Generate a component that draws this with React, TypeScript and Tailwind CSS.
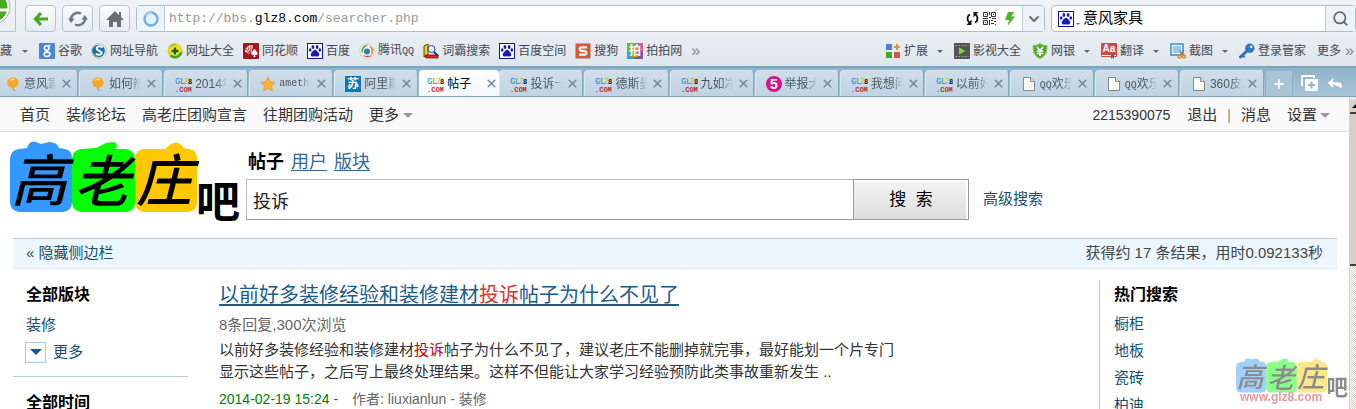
import type { ReactNode } from "react";
import { ChevronDown, Plus, Reply, Search, X } from "lucide-react";

const sans = "font-['Liberation_Sans','Noto_Sans_CJK_SC',sans-serif]";

/* ---------- icons ---------- */

function Icon({ children, size = 16 }: { children: ReactNode; size?: number }) {
  return (
    <svg width={size} height={size} viewBox="0 0 16 16" className="shrink-0" aria-hidden="true">
      {children}
    </svg>
  );
}

const PawIcon = () => (
  <Icon>
    <rect x="0.5" y="0.5" width="15" height="15" fill="#fff" stroke="#1414a0" />
    <g fill="#1717c4">
      <ellipse cx="5.9" cy="4" rx="1.4" ry="2" />
      <ellipse cx="10.1" cy="4" rx="1.4" ry="2" />
      <ellipse cx="3.2" cy="7" rx="1.3" ry="1.8" />
      <ellipse cx="12.8" cy="7" rx="1.3" ry="1.8" />
      <path d="M8 6.800c1.500 0 2 1.700 3.300 2.700 1.500 1.200 1.200 4-.8 4.100-1 0-1.500-.4-2.500-.4s-1.500.4-2.500.4c-2-.1-2.300-2.900-.8-4.100C6 8.500 6.500 6.800 8 6.800z" />
    </g>
  </Icon>
);

const GoogleIcon = () => (
  <Icon>
    <rect width="16" height="16" rx="1" fill="#4a86dc" />
    <g fill="none" stroke="#fff" strokeWidth="1.600">
      <circle cx="7.700" cy="5" r="2.300" />
      <ellipse cx="8" cy="11.300" rx="2.900" ry="2.200" />
      <path d="M9.500 2.500h2M8.500 7.200c-1 .8-.5 1.200.5 2" />
    </g>
  </Icon>
);

const NavSiteIcon = () => (
  <Icon>
    <circle cx="8" cy="8" r="7.500" fill="#e8eef2" stroke="#b8c6d0" />
    <circle cx="7.500" cy="8" r="6.300" fill="#1d6fa5" />
    <path d="M11.500 4.500C8 2 5 4 6 6.300c.8 1.700 4.500 1.500 4.700 3.600.2 1.800-3.200 2.500-6 1" fill="none" stroke="#fff" strokeWidth="2" />
    <path d="M2 10a6 6 0 0 0 5 4.500l-1-2.500z" fill="#5cb531" />
  </Icon>
);

const PlusBallIcon = () => (
  <Icon>
    <circle cx="8" cy="8" r="7.500" fill="#e9d414" />
    <path d="M2.500 13A7.500 7.500 0 0 0 15.500 8c-3 3-9 2-13 5z" fill="#3aa72a" />
    <path d="M1 5.500A7.500 7.500 0 0 1 10 .8C7 1.500 3 3 1 5.500z" fill="#71b82c" />
    <circle cx="8" cy="8" r="4.800" fill="#f5e535" />
    <path d="M8 4.500v7M4.500 8h7" stroke="#17651e" strokeWidth="2.400" />
  </Icon>
);

const FlushIcon = () => (
  <Icon>
    <rect width="16" height="16" rx="1" fill="#a5161d" />
    <path d="M2 9C2 4 6 1.500 10 2.500L8 12z" fill="#f3dcda" />
    <path d="M7.500 12 3 6m4.500 6L5 4m2.500 8L8 3M7 12 2 9" stroke="#a5161d" strokeWidth=".8" />
    <path d="M11.500 6c2 2.500 3 3 3 4.500s-2 2-2.500 1l.5 2.500h-2l.5-2.500c-.5 1-2.500.5-2.500-1s1-2 3-4.500z" fill="#fff" />
  </Icon>
);

const TencentIcon = () => (
  <Icon>
    <circle cx="8" cy="8" r="7.300" fill="#fafafa" stroke="#c4ccd0" strokeWidth=".8" />
    <path d="M10 1.500C4 1 1 6 3 11c1-5 3-7.500 7-9.500z" fill="#57ad40" />
    <path d="M10 2c5 2 5.500 8 2 11 1-4 .5-7-2-11z" fill="#ee8c2c" />
    <path d="M3.500 12c3 3 7 2.500 9 .5-3 .5-6 .5-9-.5z" fill="#d93b2c" />
    <circle cx="8" cy="8.500" r="3" fill="#2482b4" />
  </Icon>
);

const DictIcon = () => (
  <Icon>
    <path d="M1 3 5 1v11l-4 2z" fill="#f4cf1f" stroke="#5b4300" />
    <path d="M2 12h13v3H3z" fill="#d62b20" stroke="#6b1711" strokeWidth=".8" />
    <circle cx="8.500" cy="6" r="3.500" fill="#e4f1fb" stroke="#2b4c9c" />
    <path d="m11 9 4 4" stroke="#2b2b7c" strokeWidth="2" />
  </Icon>
);

const SogouIcon = () => (
  <Icon>
    <rect x=".5" y=".5" width="15" height="15" rx="1" fill="#d9572a" stroke="#b9a69d" />
    <path d="M12 4.300H6.500c-2.400 0-2.400 3.300 0 3.500l3 .3c2.400.3 2.400 3.600 0 3.600H4" fill="none" stroke="#fff" strokeWidth="2.200" />
  </Icon>
);

const PaipaiIcon = () => (
  <Icon>
    <rect width="8" height="8" fill="#76b82a" />
    <rect x="8" width="8" height="8" fill="#d95aa0" />
    <rect y="8" width="8" height="8" fill="#35a3c6" />
    <rect x="8" y="8" width="8" height="8" fill="#7d55a5" />
    <rect x="5" y="2" width="6" height="12" fill="#e88c22" />
    <text x="8" y="12" textAnchor="middle" fill="#fff" className="font-['Noto_Sans_CJK_SC',sans-serif] text-[12px] font-bold">拍</text>
  </Icon>
);

const AddonIcon = () => (
  <Icon>
    <rect x="1" y="1" width="6" height="6" fill="#4f80cc" />
    <rect x="1" y="9" width="6" height="6" fill="#48a32b" />
    <rect x="9" y="9" width="6" height="6" fill="#d0564d" />
    <path d="M12 1v6M9 4h6" stroke="#e58b42" strokeWidth="2" />
  </Icon>
);

const VideoIcon = () => (
  <Icon>
    <rect width="16" height="16" rx="1" fill="#53564f" />
    <path d="M1.500 2.500h13M1.500 13.500h13" stroke="#a6a89f" strokeDasharray="1.500 1.500" />
    <path d="m5 4.500 6.500 3.500L5 11.500z" fill="#83d63e" />
  </Icon>
);

const BankIcon = () => (
  <Icon>
    <path d="M8 .5c2 1.500 4.500 2 7 2 .3 6.500-1.500 11-7 13-5.500-2-7.300-6.500-7-13 2.500 0 5-.5 7-2z" fill="#4eac2a" stroke="#8bcc6d" />
    <path d="m5 4 3 3.500L11 4M8 7.500V13M4.800 8h6.400M4.800 10.500h6.400" stroke="#fff" strokeWidth="1.600" fill="none" />
  </Icon>
);

const TranslateIcon = () => (
  <Icon>
    <rect width="16" height="14" rx="1" fill="#d24a3e" />
    <path d="M1 12.500h14" stroke="#fff" />
    <path d="M10 11h3v5l-1.500-1.500L10 16z" fill="#3867b5" />
    <text x="8" y="9" textAnchor="middle" fill="#fff" className="font-['Liberation_Sans',sans-serif] text-[10px] font-bold">Aa</text>
  </Icon>
);

const CaptureIcon = () => (
  <Icon>
    <rect x="1" y="1" width="12" height="11" fill="#e7f3fb" stroke="#3a8dc4" strokeWidth="1.500" />
    <rect x="3" y="3" width="8" height="7" fill="#9accea" />
    <path d="m9 7 4 5m1-5-4 5" stroke="#777" strokeWidth="1.200" />
    <circle cx="9.500" cy="13.500" r="1.600" fill="none" stroke="#e58a1d" strokeWidth="1.500" />
    <circle cx="14" cy="13.500" r="1.400" fill="none" stroke="#e58a1d" strokeWidth="1.500" />
  </Icon>
);

const KeyIcon = () => (
  <Icon>
    <path d="m8.500 7.500-7 6.500" stroke="#2b6fb8" strokeWidth="3" strokeLinecap="round" />
    <path d="m4 12.500 1.500 2" stroke="#2b6fb8" strokeWidth="2" />
    <circle cx="10.800" cy="5.200" r="4.700" fill="#2f78c4" />
    <circle cx="12.200" cy="3.900" r="1.300" fill="#e8f2fb" />
  </Icon>
);

const BalloonIcon = () => (
  <Icon>
    <path d="M8 1.500c4 0 6 3 5.500 6-.4 2.500-2.500 4-4.500 4.200L7.500 14l-.5-2.500C3.500 11 2 8.500 2.200 6 2.500 3.500 5 1.500 8 1.500z" fill="#f8a626" />
    <path d="M5 4.500c1.500-1.500 3.500-1.500 5-.5" stroke="#fdd98f" strokeWidth="1.500" fill="none" />
    <path d="M8 12.500c0 1.500 1.500 1 1.500 2.500" stroke="#b37a38" fill="none" />
  </Icon>
);

const StarIcon = () => (
  <Icon>
    <path d="m8 1 2.200 4.600 5 .7-3.700 3.500.9 5L8 12.400l-4.400 2.400.9-5L.8 6.300l5-.7z" fill="#f6b23d" stroke="#e49b30" strokeWidth=".8" />
  </Icon>
);

const SuIcon = () => (
  <Icon>
    <rect width="16" height="16" fill="#0f78b8" />
    <text x="8" y="12" textAnchor="middle" fill="#fff" className="font-['Noto_Sans_CJK_SC',sans-serif] text-[12px] font-bold">苏</text>
  </Icon>
);

const FiveIcon = () => (
  <Icon>
    <circle cx="8" cy="8" r="8" fill="#d3148c" />
    <text x="8" y="13" textAnchor="middle" fill="#fff" className="font-['Liberation_Sans',sans-serif] text-[14px] font-bold">5</text>
  </Icon>
);

const PageIcon = () => (
  <Icon>
    <path d="M2.500 1.500h7l4 4v9h-11z" fill="#fbfbf8" stroke="#83898c" />
    <path d="M9.500 1.500v4h4" fill="#dfe3e4" stroke="#83898c" />
  </Icon>
);

const GlzIcon = () => (
  <svg width="17" height="16" viewBox="0 0 17 16" className="shrink-0 font-['Liberation_Mono',monospace]" aria-hidden="true">
    <g className="text-[9px]">
      <text x="0" y="8" fill="#1f7fdc">G</text>
      <text x="5" y="8" fill="#2fa848">L</text>
      <text x="9" y="8" fill="#ecaf45">Z</text>
    </g>
    <text x="13" y="8" fill="#111" className="text-[7px] font-bold">8</text>
    <text x="0" y="16" fill="#bd2a20" className="text-[7px] font-bold">.COM</text>
  </svg>
);

const RefreshIcon = () => (
  <svg width="20" height="18" viewBox="0 0 20 18" fill="none" aria-hidden="true">
    <path d="M3 10a7 6.500 0 0 1 10-6.500M17 8a7 6.500 0 0 1-10 6.500" stroke="#6f7780" strokeWidth="2.400" />
    <path d="M0 8.500h6.500L3.200 13zM13.500 9.500H20L16.800 5z" fill="#6f7780" />
  </svg>
);

const CycleIcon = () => (
  <svg width="13" height="13" viewBox="0 0 13 13" aria-hidden="true">
    <path d="M4 2.500C.8 4 .8 9 3.500 10.500M9 10.500c3.200-1.500 3.200-6.500.5-8" fill="none" stroke="#111" strokeWidth="1.800" />
    <path d="M5.500 7.500V13H.5zM7.500 5.500V0h5z" fill="#111" />
  </svg>
);

const QrIcon = () => (
  <svg width="13" height="13" viewBox="0 0 13 13" aria-hidden="true">
    <g fill="none" stroke="#333">
      <path d="M.5.500h4v4h-4zM8.500.500h4v4h-4zM.5 8.500h4v4h-4z" />
      <path d="M2 2.500h1M10 2.500h1M2 10.500h1M6.500 0v3M6 5.500h2M0 6.500h5M9 6.500h4M6.500 8v5M8 8.500h2M11 9.500h2M8 11.500h3M12 12.500h1" />
    </g>
  </svg>
);

const BoltIcon = () => (
  <svg width="12" height="14" viewBox="0 0 12 14" aria-hidden="true">
    <path d="M4 0h6L7.500 4.500H11L3.500 14 5 8H1z" fill="#4db52a" />
  </svg>
);

const Caret = ({ className = "" }: { className?: string }) => (
  <span className={`inline-block h-0 w-0 border-x-transparent border-b-0 ${className}`} />
);

/* ---------- site logo ---------- */

function Logo({ className }: { className: string }) {
  return (
    <svg viewBox="0 0 230 84" className={className} role="img" aria-label="高老庄吧">
      <path d="M0 17q1-8 9-9l8-1q3-8 9-6l5 2 8-2q8 0 10 6l6 1q7 1 7 9v44q0 9-9 10H9q-8-1-9-9z" fill="#3399ff" />
      <path d="M62 17q1-8 9-9l15-1 10-5 7-1q6 1 3 7l10 0q8 1 9 9v44q0 9-9 10H71q-8-1-9-9z" fill="#00ff00" />
      <path d="M125 17q1-8 8-9l22 0 6-5q7-4 11 2l4 3 3 0q8 1 8 9v44q0 9-9 10h-44q-8-1-9-9z" fill="#ffc800" />
      <g className="font-['Noto_Sans_CJK_SC',sans-serif] text-[56px] font-medium italic">
        <text x="1" y="60">高</text>
        <text x="64" y="61">老</text>
        <text x="126" y="60">庄</text>
      </g>
      <text x="186" y="77" className="font-['Noto_Sans_CJK_SC',sans-serif] text-[44px] font-bold">吧</text>
    </svg>
  );
}

/* ---------- browser chrome ---------- */

const SmallQQ = () => <span className="font-['Liberation_Mono',monospace] text-[10px]">QQ</span>;

const bookmarks = [
  { label: "谷歌", icon: <GoogleIcon /> },
  { label: "网址导航", icon: <NavSiteIcon /> },
  { label: "网址大全", icon: <PlusBallIcon /> },
  { label: "同花顺", icon: <FlushIcon /> },
  { label: "百度", icon: <PawIcon /> },
  { label: <span>腾讯<SmallQQ /></span>, icon: <TencentIcon /> },
  { label: "词霸搜索", icon: <DictIcon /> },
  { label: "百度空间", icon: <PawIcon /> },
  { label: "搜狗", icon: <SogouIcon /> },
  { label: "拍拍网", icon: <PaipaiIcon /> },
];

const tools = [
  { label: "扩展", icon: <AddonIcon />, menu: true },
  { label: "影视大全", icon: <VideoIcon />, menu: false },
  { label: "网银", icon: <BankIcon />, menu: true },
  { label: "翻译", icon: <TranslateIcon />, menu: true },
  { label: "截图", icon: <CaptureIcon />, menu: true },
  { label: "登录管家", icon: <KeyIcon />, menu: false },
];

const tabs = [
  { title: "意风家", icon: <BalloonIcon /> },
  { title: "如何辨", icon: <BalloonIcon /> },
  { title: "2014年", icon: <GlzIcon /> },
  { title: "amethy", icon: <StarIcon />, mono: true },
  { title: "阿里斯", icon: <SuIcon /> },
  { title: "帖子", icon: <GlzIcon />, active: true },
  { title: "投诉一", icon: <GlzIcon /> },
  { title: "德斯曼", icon: <GlzIcon /> },
  { title: "九如净", icon: <GlzIcon /> },
  { title: "举报大", icon: <FiveIcon /> },
  { title: "我想问", icon: <GlzIcon /> },
  { title: "以前好", icon: <GlzIcon /> },
  { title: <><SmallQQ />欢乐</>, icon: <PageIcon /> },
  { title: <><SmallQQ />欢乐</>, icon: <PageIcon /> },
  { title: "360皮", icon: <PageIcon /> },
];

const toolButton =
  "flex h-[27px] w-[31px] items-center justify-center rounded-sm border border-[#b3c3d0] bg-gradient-to-b from-[#fbfcfd] to-[#e6edf2]";

function AddressRow() {
  return (
    <div className="flex h-8 items-end">
      <div className="mr-[9px] h-8 w-4 shrink-0 overflow-hidden border-r border-b border-[#b3c3d0]">
        <svg width="16" height="32" viewBox="0 0 16 32" aria-hidden="true">
          <circle cx="-7" cy="7" r="17" fill="#fff" stroke="#9db3c0" />
          <circle cx="-7" cy="7" r="14.500" fill="#44ab1f" />
          <path d="M-8 10H8" stroke="#fff" strokeWidth="3" />
        </svg>
      </div>
      <div className="flex gap-1.5">
        <button className={toolButton} aria-label="后退">
          <svg width="16" height="16" viewBox="0 0 16 16" aria-hidden="true">
            <path d="M8 2 2.500 8 8 14M3 8h12" fill="none" stroke="#4aa622" strokeWidth="3.200" />
          </svg>
        </button>
        <button className={toolButton} aria-label="刷新"><RefreshIcon /></button>
        <button className={toolButton} aria-label="主页">
          <svg width="18" height="16" viewBox="0 0 18 16" fill="#67707a" aria-hidden="true">
            <path d="M9 0 0 9h3v7h4v-5h4v5h4V9h3l-3-3V1h-2v3z" />
          </svg>
        </button>
      </div>
      <div className="ml-1.5 flex h-[27px] flex-1 items-stretch rounded-sm border border-[#a9bfcf] bg-white">
        <div className="flex w-7 items-center justify-center border-r border-[#bccddb] bg-[#eef3f7]">
          <svg width="16" height="16" viewBox="0 0 16 16" aria-hidden="true">
            <circle cx="8" cy="8" r="6.500" fill="#e3f2fd" stroke="#76aee0" strokeWidth="2.500" />
            <path d="M3 5a6 6 0 0 1 6-3" stroke="#bfddf5" strokeWidth="1.500" fill="none" />
          </svg>
        </div>
        <div role="textbox" aria-label="地址" className="flex flex-1 items-center pl-1 font-['Liberation_Mono',monospace] text-[13px] text-[#999]">
          <span>http://bbs.<span className="text-black">glz8.com</span>/searcher.php</span>
        </div>
        <div className="flex items-center gap-1 pr-1.5">
          <CycleIcon />
          <QrIcon />
          <span className="pl-1"><BoltIcon /></span>
        </div>
        <button className="flex w-[22px] items-center justify-center border-l border-[#bccddb] bg-[#edf2f6]" aria-label="历史">
          <ChevronDown size={16} strokeWidth={3} className="text-[#66707b]" />
        </button>
      </div>
      <div className="ml-1.5 flex h-[27px] w-[305px] items-stretch rounded-sm border border-[#a9bfcf] bg-white">
        <button className="flex items-center pl-1.5" aria-label="搜索引擎">
          <PawIcon />
          <Caret className="mt-2.5 ml-0.5 border-x-2 border-t-2 border-t-[#666]" />
        </button>
        <input aria-label="网页搜索" defaultValue="意风家具" className="w-0 flex-1 bg-transparent pl-[3px] text-[15px] text-black outline-none" />
        <button className="flex w-[30px] items-center justify-center border-l border-[#bccddb] bg-[#edf2f6]" aria-label="搜索网页">
          <Search size={17} strokeWidth={2.5} className="text-[#5f6972]" />
        </button>
      </div>
    </div>
  );
}

function BookmarkRow() {
  return (
    <div className="flex h-[34px] items-center justify-between pt-1 text-[12px] leading-4 whitespace-nowrap text-[#3f4750]">
      <div className="flex items-center gap-[9px]">
        <button className="flex items-center gap-2.5">
          藏
          <Caret className="mr-0.5 border-x-[3px] border-t-[3px] border-t-[#5c6670]" />
        </button>
        {bookmarks.map((item, i) => (
          <a key={i} href="#" className="flex items-center gap-[3px]">
            {item.icon}
            {item.label}
          </a>
        ))}
        <button className="text-[16px] text-[#7b858e]" aria-label="更多书签">»</button>
      </div>
      <div className="flex items-center gap-[11px]">
        {tools.map((item) => (
          <button key={item.label} className="flex items-center gap-[3px]">
            {item.icon}
            {item.label}
            {item.menu && <Caret className="ml-1.5 border-x-[3px] border-t-[3px] border-t-[#5c6670]" />}
          </button>
        ))}
        <button className="flex items-center gap-1 pr-0.5">
          更多 <span className="text-[16px] text-[#7b858e]">»</span>
        </button>
      </div>
    </div>
  );
}

function TabStrip() {
  return (
    <div className="flex h-[31px] items-stretch border-t-2 border-b border-t-[#7fa5be] border-b-[#7f9fb6] bg-gradient-to-b from-[#8fb3ca] to-[#a9c4d7] pt-0.5">
      <div role="tablist" className="-ml-1.5 flex flex-1">
        {tabs.map((tab, i) => (
          <div
            key={i}
            role="tab"
            aria-selected={!!tab.active}
            className={
              tab.active
                ? "flex min-w-0 flex-1 items-center rounded-t-sm bg-gradient-to-b from-white to-[#f2f7fa] pt-px pl-2 text-black"
                : "mr-px flex min-w-0 flex-1 items-center rounded-t-sm border-x border-t border-[#dbe7f0] border-r-[#85a7bf] bg-gradient-to-b from-[#cfdeea] to-[#bfd2e1] pl-2.5 text-[#4c5963]"
            }
          >
            {tab.icon}
            <button
              className={`ml-[3px] w-8 overflow-hidden text-left whitespace-nowrap ${
                tab.mono ? "font-['Liberation_Mono',monospace] text-[10px]" : "text-[12px]"
              } ${tab.active ? "" : "[mask-image:linear-gradient(to_right,black_65%,transparent)]"}`}
            >
              {tab.title}
            </button>
            <button className={tab.active ? "ml-1.5" : "ml-1"} aria-label="关闭标签">
              <X size={13} strokeWidth={3} className="text-[#75899a]" />
            </button>
          </div>
        ))}
      </div>
      <button className="flex w-7 items-center justify-center border border-b-0 border-[#8eb0c6] bg-[#a9c4d7]" aria-label="新标签">
        <Plus size={14} strokeWidth={3} className="text-white" />
      </button>
      <div className="flex w-[63px] items-center gap-2 pl-2">
        <button aria-label="标签列表">
          <svg width="17" height="16" viewBox="0 0 17 16" aria-hidden="true">
            <path d="M1 11V1h12v2" fill="none" stroke="#fff" strokeWidth="2" />
            <rect x="4" y="4" width="13" height="12" rx="1" fill="#fff" />
            <path d="M10.500 6.500v7M7 10h7" stroke="#8fb0c6" strokeWidth="2" />
          </svg>
        </button>
        <button aria-label="恢复标签">
          <Reply size={18} className="fill-white text-white" />
        </button>
      </div>
    </div>
  );
}

/* ---------- page ---------- */

function TopNav() {
  return (
    <nav className="flex h-[35px] items-center justify-between border-b border-[#dcdcdc] bg-[#f9f9f9] pt-0.5 pr-[19px] pl-5 text-[15px] whitespace-nowrap text-[#333]">
      <div className="flex items-center gap-4">
        <a href="#">首页</a>
        <a href="#">装修论坛</a>
        <a href="#">高老庄团购宣言</a>
        <a href="#">往期团购活动</a>
        <a href="#" className="flex items-center gap-1">
          更多
          <Caret className="border-x-[5px] border-t-[5px] border-t-[#999]" />
        </a>
      </div>
      <div className="flex items-center">
        <a href="#" className="mr-[17px] text-[14px]">2215390075</a>
        <a href="#">退出</a>
        <span className="mx-2.5 text-[14px] text-[#888]">|</span>
        <a href="#" className="mr-4">消息</a>
        <a href="#" className="flex items-center gap-[3px]">
          设置
          <Caret className="border-x-[5px] border-t-[5px] border-t-[#999]" />
        </a>
      </div>
    </nav>
  );
}

function SearchHeader() {
  return (
    <header className="flex h-[106px] items-start pt-[9px] pl-2.5">
      <Logo className="w-[230px] shrink-0" />
      <form className="ml-1.5 flex-1" onSubmit={(e) => e.preventDefault()}>
        <div className="flex h-[38px] items-center gap-[7px] pt-1 pl-0.5 text-[18px] text-[#336699]">
          <strong className="text-black">帖子</strong>
          <a href="#" className="underline underline-offset-2">用户</a>
          <a href="#" className="underline underline-offset-2">版块</a>
        </div>
        <div className="flex items-center">
          <input
            aria-label="搜索帖子"
            defaultValue="投诉"
            className="h-[41px] w-[607px] border border-r-0 border-[#bbb] border-b-[#999] bg-white px-1.5 text-[18px] text-[#222] outline-none"
          />
          <button className="h-[41px] w-[116px] border border-[#999] bg-gradient-to-b from-[#f4f4f4] to-[#dddddd] text-[17px] text-black shadow-[inset_-2px_2px_0_#fff]">
            搜&nbsp; 索
          </button>
          <a href="#" className="ml-3.5 text-[15px] text-[#145070]">高级搜索</a>
        </div>
      </form>
    </header>
  );
}

function Sidebar() {
  return (
    <aside className="w-[175px] shrink-0">
      <div className="border-b border-[#b9cdd8] pb-3 pl-[13px]">
        <h2 className="pt-px text-[16px] leading-7 font-bold text-black">全部版块</h2>
        <a href="#" className="block text-[15px] leading-[31px] text-[#145070]">装修</a>
        <a href="#" className="flex items-center gap-[7px] text-[15px] leading-6 text-[#145070]">
          <span className="-ml-px flex h-[21px] w-[21px] items-center justify-center border border-[#a9c8ea]">
            <Caret className="border-x-[6px] border-t-[6px] border-t-[#13579b]" />
          </span>
          更多
        </a>
      </div>
      <h2 className="pt-3 pl-[13px] text-[16px] leading-7 font-bold text-black">全部时间</h2>
    </aside>
  );
}

function Result() {
  return (
    <article className="ml-[31px] max-w-[690px] flex-1 pt-px text-[15px]">
      <h3 className="text-[20px] leading-7 text-[#1b5b8c]">
        <a href="#" className="underline underline-offset-2">
          以前好多装修经验和装修建材<em className="text-[#e03030] not-italic">投诉</em>帖子为什么不见了
        </a>
      </h3>
      <p className="pt-0.5 leading-7 text-[#666]">8条回复,300次浏览</p>
      <p className="leading-[22px] text-[#333]">
        以前好多装修经验和装修建材<em className="text-[#c00] not-italic">投诉</em>帖子为什么不见了，建议老庄不能删掉就完事，最好能划一个片专门显示这些帖子，之后写上最终处理结果。这样不但能让大家学习经验预防此类事故重新发生 ..
      </p>
      <p className="flex pt-0.5 text-[14px] leading-7 text-[#666]">
        <span className="mr-3.5 text-[#008000]">2014-02-19 15:24 -</span>
        <span>作者: liuxianlun - 装修</span>
      </p>
    </article>
  );
}

function HotSearch() {
  return (
    <aside className="ml-auto w-[250px] shrink-0 border-l border-[#b9cdd8] pl-3.5">
      <h2 className="mb-px pt-px text-[16px] leading-7 font-bold text-black">热门搜索</h2>
      {["橱柜", "地板", "瓷砖", "柏迪"].map((word) => (
        <a key={word} href="#" className="block text-[15px] leading-[27px] text-[#145070]">{word}</a>
      ))}
    </aside>
  );
}

export default function App() {
  return (
    <div className={`relative flex h-screen flex-col overflow-hidden bg-white ${sans}`}>
      <div className="bg-gradient-to-b from-[#f1f4f7] to-[#dfe7ee]">
        <AddressRow />
        <BookmarkRow />
      </div>
      <TabStrip />
      <div className="flex min-h-0 flex-1">
        <div className="min-w-0 flex-1">
          <TopNav />
          <SearchHeader />
          <div className="mr-3 ml-[13px] flex h-[31px] items-center justify-between border-t border-b border-t-[#b9cdd8] border-b-[#dcebf4] bg-[#ebf6ff] pr-3.5 pl-[13px] text-[15px] text-[#444]">
            <a href="#" className="text-[#145070]">« 隐藏侧边栏</a>
            <span>获得约 17 条结果，用时0.092133秒</span>
          </div>
          <main className="flex pt-[11px] pl-[13px]">
            <Sidebar />
            <Result />
            <HotSearch />
          </main>
        </div>
        <div className="flex w-[7px] flex-col overflow-hidden border-l border-[#d4d0c8] bg-[repeating-conic-gradient(#d4d0c8_0_25%,#ffffff_0_50%)] bg-[length:2px_2px] pt-[3px]">
          <div className="flex h-[14px] items-center border-b-2 border-[#404040] bg-[#d4d0c8]">
            <span className="ml-0.5 border-x-4 border-b-4 border-x-transparent border-b-black" />
          </div>
          <div className="h-[152px] border-b-2 border-[#404040] bg-[#d4d0c8]" />
        </div>
      </div>
      <div className="pointer-events-none absolute right-2 bottom-1.5 w-28 pb-1 opacity-45">
        <Logo className="w-28" />
        <span className="absolute bottom-0 left-1 text-[12px] leading-3 font-bold text-[#c02020]">www.glz8.com</span>
      </div>
    </div>
  );
}
